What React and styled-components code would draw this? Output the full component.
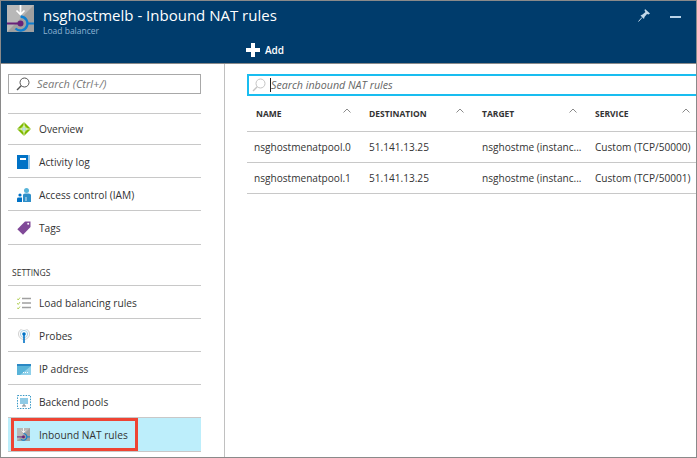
import React from 'react';
import styled, { createGlobalStyle } from 'styled-components';

const GlobalStyle = createGlobalStyle`
  html, body { margin: 0; padding: 0; background: #fff; }
  body { font-family: "Open Sans", "Liberation Sans", sans-serif; }
`;

const LensIcon = ({ color = '#555', size = 14 }) => (
  <svg width={size} height={size} viewBox="0 0 14 14" fill="none" stroke={color}>
    <circle cx="8.5" cy="5.5" r="4.5" strokeWidth="1" />
    <path d="M5.2 8.8 L1 13" strokeWidth="1.4" />
  </svg>
);

const NatIcon = ({ size }) => (
  <svg width={size} height={size} viewBox="0 0 27 27">
    <rect width="27" height="27" fill="#b8b8b8" />
    <path d="M27 0 V27 H0 Z" fill="#a0a0a0" />
    <path d="M13.5 11.5 A7 7 0 1 1 8.5 23.5" fill="none" stroke="#0f7fd0" strokeWidth="2.4" />
    <path d="M20.5 18.5 H27" stroke="#0f7fd0" strokeWidth="2" />
    <path d="M0 18.5 H13" stroke="#68217a" strokeWidth="2" />
    <circle cx="13.5" cy="18.5" r="3" fill="#68217a" />
    <path d="M13.5 0 V9.5 M9.5 5.5 L13.5 9.5 L17.5 5.5" fill="none" stroke="#fff" strokeWidth="1.7" />
  </svg>
);

const OverviewIcon = () => (
  <svg width="14" height="14" viewBox="0 0 14 14">
    <path d="M7 0 L14 7 L7 14 L0 7 Z" fill="#7fba00" />
    <path d="M7 3 L11 7 L7 11 L3 7 Z" fill="#c4e37a" />
    <circle cx="7" cy="7" r="1.6" fill="#59b4d9" />
    <path d="M7 0 V14 M0 7 H14" stroke="#fff" strokeWidth=".7" />
  </svg>
);

const LogIcon = () => (
  <svg width="13" height="14" viewBox="0 0 13 14">
    <rect width="13" height="14" fill="#0072c6" />
    <rect x="11" width="2" height="14" fill="#9cc8e8" />
    <rect x="3" y="3" width="6" height="2" fill="#fff" />
  </svg>
);

const IamIcon = () => (
  <svg width="14" height="14" viewBox="0 0 14 14" fill="#2f8fc9">
    <circle cx="9.5" cy="2.5" r="2.5" fill="#59b4d9" />
    <path d="M6 14 V7 Q6 5.5 8 5.5 H11.5 Q14 5.5 14 7 V14 Z" />
    <circle cx="3" cy="7" r="1.6" fill="#0072c6" />
    <path d="M0 14 V10.5 Q0 9.5 1.5 9.5 H5 V14 Z" fill="#0072c6" />
    <path d="M9 9 V13" stroke="#fff" strokeWidth=".8" />
  </svg>
);

const TagIcon = () => (
  <svg width="14" height="14" viewBox="0 0 14 14">
    <path d="M8 .5 H13.5 V6 L6 13.8 L.3 8.2 Z" fill="#804998" />
    <circle cx="11.2" cy="2.8" r="1" fill="#fff" />
  </svg>
);

const RulesIcon = () => (
  <svg width="14" height="12" viewBox="0 0 14 12" fill="none">
    <path d="M5 1.5 H14 M5 6 H14 M5 10.5 H14" stroke="#a0a0a0" strokeWidth="1.4" />
    <path d="M0 1.5 L1.2 3 L3 .5 M0 6 L1.2 7.5 L3 5 M0 10.5 L1.2 12 L3 9.5" stroke="#a4c639" strokeWidth=".8" />
  </svg>
);

const ProbeIcon = () => (
  <svg width="14" height="14" viewBox="0 0 14 14" fill="none">
    <circle cx="7" cy="5" r="5.5" stroke="#d0d0d0" strokeWidth="1" />
    <circle cx="7" cy="5" r="3.6" stroke="#a8cfe6" strokeWidth="1" />
    <circle cx="7" cy="5" r="1.8" fill="#0072c6" />
    <path d="M7 6 V14" stroke="#0072c6" strokeWidth="1.6" />
  </svg>
);

const IpIcon = () => (
  <svg width="14" height="11" viewBox="0 0 14 11">
    <rect width="14" height="11" fill="#59b4d9" />
    <rect width="14" height="2" fill="#2b88c4" />
    <path d="M14 2 V11 H3 Z" fill="#8fd0ea" />
    <path d="M6 8.5 H11" stroke="#fff" strokeWidth="1" strokeDasharray="1 1" />
  </svg>
);

const PoolIcon = () => (
  <svg width="14" height="14" viewBox="0 0 14 14" fill="none">
    <rect x=".5" y=".5" width="13" height="13" stroke="#3999c6" strokeDasharray="1.5 1.2" />
    <rect x="3" y="3" width="8" height="6" fill="#8fcbe6" />
    <path d="M5 11 H9 M7 9 V11" stroke="#7a8a94" strokeWidth="1.2" />
  </svg>
);

const Window = styled.div`
  width: 697px;
  height: 458px;
  box-sizing: border-box;
  border: 1px solid #8a8a8a;
  display: flex;
  flex-direction: column;
  overflow: hidden;
  background: #fff;
`;

const Header = styled.header`
  height: 62px;
  flex: none;
  background: #003c6c;
  border-bottom: 1px solid #8a8a8a;
  display: flex;
  flex-direction: column;
  position: relative;
`;

const TitleRow = styled.div`
  display: flex;
  padding: 4px 0 0 6px;
  gap: 9px;
  height: 37px;
  box-sizing: border-box;
`;

const TitleText = styled.div`
  display: flex;
  flex-direction: column;
`;

const Title = styled.div`
  color: #fff;
  font-size: 15px;
  line-height: 20px;
  white-space: nowrap;
`;

const Subtitle = styled.div`
  color: #8fb4d4;
  font-size: 8.5px;
  line-height: 11px;
`;

const WindowActions = styled.div`
  position: absolute;
  top: 8px;
  right: 15px;
  display: flex;
  align-items: center;
  gap: 20px;
`;

const Minimize = styled.div`
  width: 11px;
  height: 2px;
  background: #b9d3e8;
  margin-top: 2px;
`;

const CommandBar = styled.div`
  display: flex;
  align-items: center;
  gap: 5px;
  padding-left: 245px;
  height: 24px;
`;

const AddLabel = styled.span`
  color: #fff;
  font-size: 10px;
  font-weight: 600;
`;

const Body = styled.div`
  flex: 1;
  display: flex;
  min-height: 0;
`;

const Sidebar = styled.nav`
  width: 224px;
  flex: none;
  box-sizing: border-box;
  border-right: 1px solid #c0c0c0;
  padding: 10px 23px 0 7px;
`;

const SearchBox = styled.div`
  height: 20px;
  box-sizing: border-box;
  border: 1px solid #a8a8a8;
  display: flex;
  align-items: center;
  gap: 7px;
  padding: 0 0 1px 7px;
  margin-bottom: 19px;
`;

const Placeholder = styled.span`
  font-size: ${(p) => p.$size}px;
  font-style: italic;
  color: ${(p) => p.$color || '#777'};
  white-space: nowrap;
`;

const NavList = styled.div`
  border-top: 1px solid #c8c8c8;
`;

const NavRow = styled.div`
  height: ${(p) => p.$height || 33}px;
  box-sizing: border-box;
  padding-top: ${(p) => (p.$height ? 0 : 2)}px;
  border-bottom: 1px solid #c8c8c8;
  display: flex;
  align-items: center;
  background: ${(p) => (p.$active ? '#bdeefb' : 'transparent')};
  position: relative;
`;

const IconSlot = styled.span`
  width: 31px;
  padding-left: 9px;
  box-sizing: border-box;
  display: flex;
  align-items: center;
  justify-content: flex-start;
  flex: none;
`;

const NavLabel = styled.span`
  font-size: 10.2px;
  color: #333;
  white-space: nowrap;
`;

const SectionLabel = styled.div`
  height: 41px;
  box-sizing: border-box;
  padding: 21px 0 0 4px;
  border-bottom: 1px solid #c8c8c8;
  font-size: 8.5px;
  line-height: 14px;
  color: #333;
`;

const Highlight = styled.div`
  position: absolute;
  left: 3px;
  top: 0;
  width: 127px;
  height: 33px;
  box-sizing: border-box;
  border: 3px solid #ee4433;
`;

const Content = styled.main`
  flex: 1;
  min-width: 0;
  padding: 10px 0 0 22px;
`;

const FilterBox = styled.div`
  height: 22px;
  box-sizing: border-box;
  border: 2px solid #19bdf0;
  border-right: none;
  display: flex;
  align-items: center;
  padding: 0 0 1px 3px;
  gap: 4px;
`;

const Caret = styled.span`
  width: 1px;
  height: 14px;
  background: #222;
  margin-right: -4px;
`;

const Table = styled.div`
  display: grid;
  grid-template-columns: 113px 113px 113px 113px;
`;

const HeadCell = styled.div`
  height: 36px;
  box-sizing: border-box;
  border-bottom: 1px solid #c8c8c8;
  display: flex;
  align-items: center;
  justify-content: space-between;
  padding: 0 9px 0 9px;
  font-size: 8.5px;
  font-weight: 700;
  color: #333;
`;

const Cell = styled.div`
  height: 31px;
  box-sizing: border-box;
  border-bottom: 1px solid #c8c8c8;
  display: flex;
  align-items: center;
  padding-left: ${(p) => p.$pad ?? 9}px;
  font-size: 10.1px;
  color: #333;
  white-space: nowrap;
  overflow: hidden;
`;

const SortChevron = () => (
  <svg width="8" height="5" viewBox="0 0 8 5" fill="none" style={{ marginTop: -6 }}>
    <path d="M.5 4.5 L4 1 L7.5 4.5" stroke="#8a8a8a" strokeWidth="1" />
  </svg>
);

const mainNav = [
  { label: 'Overview', icon: <OverviewIcon />, height: 31 },
  { label: 'Activity log', icon: <LogIcon /> },
  { label: 'Access control (IAM)', icon: <IamIcon /> },
  { label: 'Tags', icon: <TagIcon />, height: 34 },
];

const settingsNav = [
  { label: 'Load balancing rules', icon: <RulesIcon /> },
  { label: 'Probes', icon: <ProbeIcon /> },
  { label: 'IP address', icon: <IpIcon /> },
  { label: 'Backend pools', icon: <PoolIcon /> },
];

const columns = ['NAME', 'DESTINATION', 'TARGET', 'SERVICE'];

const rows = [
  ['nsghostmenatpool.0', '51.141.13.25', 'nsghostme (instanc...', 'Custom (TCP/50000)'],
  ['nsghostmenatpool.1', '51.141.13.25', 'nsghostme (instanc...', 'Custom (TCP/50001)'],
];

export default function App() {
  return (
    <Window>
      <GlobalStyle />
      <Header>
        <TitleRow>
          <NatIcon size={27} />
          <TitleText>
            <Title>nsghostmelb - Inbound NAT rules</Title>
            <Subtitle>Load balancer</Subtitle>
          </TitleText>
        </TitleRow>
        <WindowActions>
          <svg width="12" height="13" viewBox="0 0 12 13">
            <path d="M7 0 L12 4.5 L10.5 5.5 L9 5 L6.5 8 L6 10 L2.5 6.5 L4.5 5.5 L7.5 3 L6.5 1.5 Z" fill="#c4d9ea" />
            <path d="M4 8.5 L.5 12.5" stroke="#c4d9ea" strokeWidth="1" />
          </svg>
          <Minimize />
        </WindowActions>
        <CommandBar>
          <svg width="14" height="14" viewBox="0 0 14 14">
            <path d="M5 0 H9 V5 H14 V9 H9 V14 H5 V9 H0 V5 H5 Z" fill="#fff" />
          </svg>
          <AddLabel>Add</AddLabel>
        </CommandBar>
      </Header>
      <Body>
        <Sidebar>
          <SearchBox>
            <LensIcon />
            <Placeholder $size={11}>Search (Ctrl+/)</Placeholder>
          </SearchBox>
          <NavList>
            {mainNav.map((item) => (
              <NavRow key={item.label} $height={item.height}>
                <IconSlot>{item.icon}</IconSlot>
                <NavLabel>{item.label}</NavLabel>
              </NavRow>
            ))}
          </NavList>
          <SectionLabel>SETTINGS</SectionLabel>
          {settingsNav.map((item) => (
            <NavRow key={item.label}>
              <IconSlot>{item.icon}</IconSlot>
              <NavLabel>{item.label}</NavLabel>
            </NavRow>
          ))}
          <NavRow $active $height={34}>
            <IconSlot><NatIcon size={13} /></IconSlot>
            <NavLabel>Inbound NAT rules</NavLabel>
            <Highlight />
          </NavRow>
        </Sidebar>
        <Content>
          <FilterBox>
            <LensIcon color="#c4c4c4" />
            <Caret />
            <Placeholder $size={10.7} $color="#666">Search inbound NAT rules</Placeholder>
          </FilterBox>
          <Table>
            {columns.map((col) => (
              <HeadCell key={col}>
                {col}
                <SortChevron />
              </HeadCell>
            ))}
            {rows.map((row) =>
              row.map((value, i) => (
                <Cell key={row[0] + i} $pad={i === 0 ? 7 : 9}>{value}</Cell>
              ))
            )}
          </Table>
        </Content>
      </Body>
    </Window>
  );
}
